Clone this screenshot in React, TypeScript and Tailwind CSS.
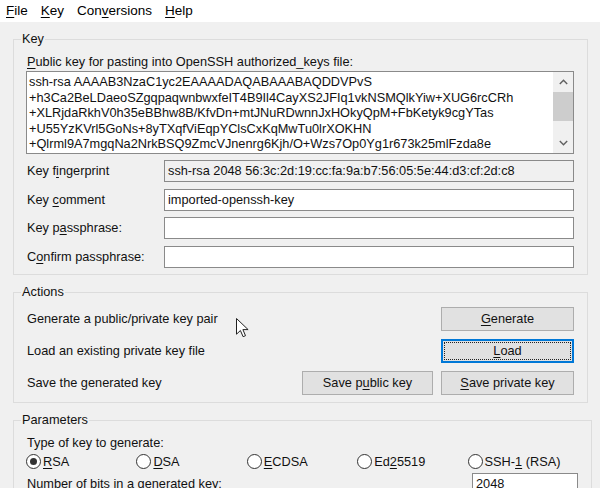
import React from 'react';

const U = ({ c }: { c: string }) => <span className="underline underline-offset-2">{c}</span>;

const keyLines = [
  'ssh-rsa AAAAB3NzaC1yc2EAAAADAQABAAABAQDDVPvS',
  '+h3Ca2BeLDaeoSZgqpaqwnbwxfeIT4B9Il4CayXS2JFIq1vkNSMQlkYiw+XUG6rcCRh',
  '+XLRjdaRkhV0h35eBBhw8B/KfvDn+mtJNuRDwnnJxHOkyQpM+FbKetyk9cgYTas',
  '+U55YzKVrl5GoNs+8yTXqfViEqpYClsCxKqMwTu0lrXOKHN',
  '+Qlrml9A7mgqNa2NrkBSQ9ZmcVJnenrg6Kjh/O+Wzs7Op0Yg1r673k25mlFzda8e',
];

const Chevron = ({ down }: { down?: boolean }) => (
  <svg width="9" height="6" viewBox="0 0 9 6" className={down ? 'rotate-180' : ''}>
    <path d="M0.8 5 L4.5 1.2 L8.2 5" fill="none" stroke="#606060" strokeWidth="1.4" />
  </svg>
);

const Field = ({ label, value, readOnly, className }: { label: React.ReactNode; value?: string; readOnly?: boolean; className: string }) => (
  <div className={`flex h-[22px] items-center ${className}`}>
    <div className="w-[138px] pl-[1px]">{label}</div>
    <div
      className={`flex h-[22px] flex-1 items-center border border-[#8a8a8a] pl-[3px] ${readOnly ? 'bg-[#f0f0f0]' : 'bg-white'}`}
    >
      {value}
    </div>
  </div>
);

const Button = ({ children, w, focused }: { children: React.ReactNode; w: string; focused?: boolean }) => (
  <button
    className={`flex h-[24px] items-center justify-center border bg-[#e1e1e1] ${w} ${
      focused
        ? 'border-[#0078d7] shadow-[inset_0_0_0_1px_#0078d7] outline-1 outline-dotted outline-offset-[-4px] outline-[#222]'
        : 'border-[#adadad]'
    }`}
  >
    {children}
  </button>
);

const Radio = ({ checked, children }: { checked?: boolean; children: React.ReactNode }) => (
  <div className="flex items-center gap-[2px]">
    <span className="flex h-[15px] w-[15px] items-center justify-center rounded-full border border-[#333] bg-white">
      {checked && <span className="h-[7px] w-[7px] rounded-full bg-[#333]" />}
    </span>
    <span>{children}</span>
  </div>
);

export default function App() {
  return (
    <div className="relative h-[488px] w-[600px] overflow-hidden bg-[#f0f0f0] font-['Liberation_Sans',Arial,sans-serif] text-[12.75px] text-[#111]">
      {/* Menu bar */}
      <div className="flex h-[22px] items-center gap-[13px] bg-white pl-[6px] text-[13.5px] text-black">
        <span><U c="F" />ile</span>
        <span><U c="K" />ey</span>
        <span>Con<U c="v" />ersions</span>
        <span><U c="H" />elp</span>
      </div>

      <div className="pl-[13px]">
        {/* Key */}
        <fieldset className="mt-[9px] w-[575px] border border-[#dcdcdc]">
          <legend className="ml-[7px] px-[1px] leading-[16px]">Key</legend>
          <div className="pb-[6px] pl-[12px] pr-[13px] pt-[7px]">
            <div className="pl-[1px] leading-[16px]">
              <U c="P" />ublic key for pasting into OpenSSH authorized_keys file:
            </div>
            <div className="mt-[1px] flex h-[83px] border border-[#8a8a8a] bg-white">
              <div className="flex-1 overflow-hidden whitespace-nowrap pl-[2px] pt-[2px] leading-[15.5px]">
                {keyLines.map((l) => (
                  <div key={l}>{l}</div>
                ))}
              </div>
              <div className="flex w-[20px] flex-col bg-[#f0f0f0]">
                <div className="flex h-[20px] items-center justify-center">
                  <Chevron />
                </div>
                <div className="h-[29px] bg-[#cdcdcd]" />
                <div className="flex-1" />
                <div className="flex h-[20px] items-center justify-center">
                  <Chevron down />
                </div>
              </div>
            </div>
            <Field
              className="mt-[6px]"
              readOnly
              label={<>Key f<U c="i" />ngerprint</>}
              value="ssh-rsa 2048 56:3c:2d:19:cc:fa:9a:b7:56:05:5e:44:d3:cf:2d:c8"
            />
            <Field className="mt-[7px]" label={<>Key <U c="c" />omment</>} value="imported-openssh-key" />
            <Field className="mt-[6px]" label={<>Key p<U c="a" />ssphrase:</>} />
            <Field className="mt-[7px]" label={<>C<U c="o" />nfirm passphrase:</>} />
          </div>
        </fieldset>

        {/* Actions */}
        <fieldset className="mt-[9px] w-[575px] border border-[#dcdcdc]">
          <legend className="ml-[7px] px-[1px] leading-[16px]">Actions</legend>
          <div className="flex flex-col gap-[8px] pb-[7px] pl-[12px] pr-[13px] pt-[7px]">
            <div className="flex items-center">
              <span className="flex-1 pl-[1px]">Generate a public/private key pair</span>
              <Button w="w-[133px]"><U c="G" />enerate</Button>
            </div>
            <div className="flex items-center">
              <span className="flex-1 pl-[1px]">Load an existing private key file</span>
              <Button w="w-[133px]" focused><U c="L" />oad</Button>
            </div>
            <div className="flex items-center gap-[8px]">
              <span className="flex-1 pl-[1px]">Save the generated key</span>
              <Button w="w-[131px]">Save p<U c="u" />blic key</Button>
              <Button w="w-[133px]"><U c="S" />ave private key</Button>
            </div>
          </div>
        </fieldset>

        {/* Parameters */}
        <fieldset className="mt-[9px] w-[575px] border border-[#dcdcdc]">
          <legend className="ml-[7px] px-[1px] leading-[16px]">Parameters</legend>
          <div className="pb-[6px] pl-[12px] pr-[13px] pt-[7px]">
            <div className="pl-[1px] leading-[16px]">Type of key to generate:</div>
            <div className="mt-[1px] grid h-[16px] w-[552px] grid-cols-5 items-center">
              <Radio checked><U c="R" />SA</Radio>
              <Radio><U c="D" />SA</Radio>
              <Radio><U c="E" />CDSA</Radio>
              <Radio>Ed<U c="2" />5519</Radio>
              <Radio>SSH-<U c="1" /> (RSA)</Radio>
            </div>
            <div className="mt-[5px] flex h-[22px] items-center">
              <span className="flex-1 pl-[1px]">Number of bits in a generated key:</span>
              <div className="flex h-[22px] w-[106px] items-center border border-[#8a8a8a] bg-white pl-[3px]">2048</div>
            </div>
          </div>
        </fieldset>
      </div>

      {/* Mouse pointer */}
      <svg width="14" height="21" viewBox="0 0 14 21" className="absolute left-[236px] top-[318px]">
        <path
          d="M0.5 0.5 L0.5 16.2 L4.4 12.5 L7.1 18.7 L9.5 17.7 L6.9 11.6 L12.1 11.6 Z"
          fill="#fff"
          stroke="#222"
          strokeWidth="1"
          strokeLinejoin="round"
        />
      </svg>
    </div>
  );
}
